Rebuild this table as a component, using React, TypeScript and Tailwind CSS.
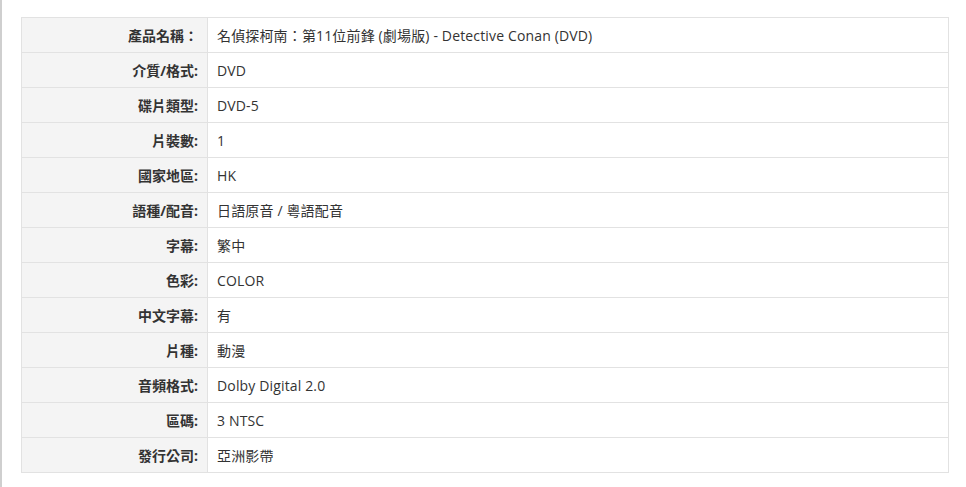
import React from "react";

const rows: [string, string][] = [
  ["產品名稱：", "名偵探柯南：第11位前鋒 (劇場版) - Detective Conan (DVD)"],
  ["介質/格式:", "DVD"],
  ["碟片類型:", "DVD-5"],
  ["片裝數:", "1"],
  ["國家地區:", "HK"],
  ["語種/配音:", "日語原音 / 粵語配音"],
  ["字幕:", "繁中"],
  ["色彩:", "COLOR"],
  ["中文字幕:", "有"],
  ["片種:", "動漫"],
  ["音頻格式:", "Dolby Digital 2.0"],
  ["區碼:", "3 NTSC"],
  ["發行公司:", "亞洲影帶"],
];

export default function App() {
  return (
    <div
      className="w-[966px] h-[487px] bg-white border-l-2 border-[#cfcfcf] pl-[19px] pt-[17px] text-[14px] text-[#333]"
      style={{ fontFamily: '"Open Sans", "Noto Sans CJK TC", sans-serif' }}
    >
      <div className="w-[928px] border border-[#e2e2e2]">
        {rows.map(([k, v], i) => (
          <div
            key={i}
            className={`flex h-[34px] box-content ${i > 0 ? "border-t border-[#e2e2e2]" : ""}`}
          >
            <div className="w-[186px] shrink-0 bg-[#f4f4f4] border-r border-[#e2e2e2] flex items-center justify-end pr-[9px] font-bold">
              {k}
            </div>
            <div className="flex-1 flex items-center pl-[9px] tracking-[0.15px]">{v}</div>
          </div>
        ))}
      </div>
    </div>
  );
}
